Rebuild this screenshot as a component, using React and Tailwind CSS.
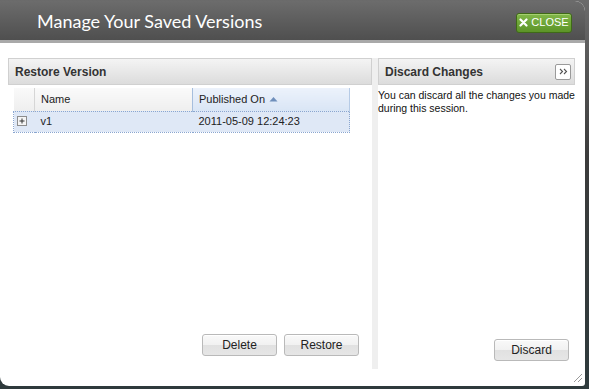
import React from "react";

function Btn({ children, className = "" }) {
  return (
    <button
      className={
        "h-[22px] w-[75px] rounded-[3px] border border-[#b9b9b9] bg-[linear-gradient(#f9f9f9_0%,#f1f1f1_50%,#e1e1e1_51%,#e6e6e6_100%)] text-[12px] text-[#222] leading-none shadow-[inset_0_1px_0_#fff] " +
        className
      }
      style={{ fontFamily: '"Liberation Sans", Arial, sans-serif' }}
    >
      {children}
    </button>
  );
}

function PanelHeader({ title, children }) {
  return (
    <div className="flex h-[27px] items-center justify-between border border-[#d0d0d0] bg-[linear-gradient(#f4f4f4,#dcdcdc)] pl-[6px] pr-[3px]">
      <span className="text-[12px] font-bold text-[#333]">{title}</span>
      {children}
    </div>
  );
}

export default function App() {
  return (
    <div
      className="relative h-[389px] w-[589px] overflow-hidden bg-[linear-gradient(#6b6b6b_0%,#3c3c3c_40%,#2e3a3c_100%)]"
      style={{ fontFamily: '"Liberation Sans", Arial, sans-serif' }}
    >
      <div className="mt-[1px] flex h-[385px] w-[585px] flex-col overflow-hidden rounded-tr-[10px] rounded-bl-[9px] rounded-br-[3px] bg-white">
        {/* Title bar */}
        <div className="flex h-[42px] shrink-0 items-center justify-between border-b-[3px] border-[#a9a9a9] bg-[linear-gradient(#6c6c6c,#4f4f4f)] pl-[37px] pr-[13px]">
          <h1
            className="pt-[2px] text-[18px] text-white"
            style={{ fontFamily: 'Lato, "Open Sans", sans-serif' }}
          >
            Manage Your Saved Versions
          </h1>
          <button className="mt-[4px] flex h-[20px] w-[56px] items-center justify-center gap-[3px] rounded-[3px] border border-[#3f6a17] bg-[linear-gradient(#82b84a,#5c9427)] text-[11px] text-white shadow-[inset_0_1px_0_#a5d070]">
            <svg width="9" height="9" viewBox="0 0 9 9">
              <path d="M1.5 1.5l6 6M7.5 1.5l-6 6" stroke="#fff" strokeWidth="2.2" strokeLinecap="round" />
            </svg>
            CLOSE
          </button>
        </div>

        {/* Body */}
        <div className="flex flex-1 px-[8px] pb-[17px] pt-[15px]">
          {/* Restore Version */}
          <div className="flex w-[364px] flex-col">
            <PanelHeader title="Restore Version" />
            <div className="pl-[5px] pt-[3px]">
              <table className="w-[337px] border-collapse text-[11px] text-[#222]">
                <thead>
                  <tr className="h-[23px]">
                    <th className="w-[21px] border-r border-[#d6d6d6] bg-[linear-gradient(#fafafa,#eeeeee)]"></th>
                    <th className="w-[158px] border-r border-[#a6bedd] bg-[linear-gradient(#fafafa,#eeeeee)] pl-[6px] text-left font-normal">
                      Name
                    </th>
                    <th className="border-r border-[#b6cbe6] bg-[linear-gradient(#ecf2fb,#d9e5f5)] pl-[6px] text-left font-normal">
                      <span className="inline-flex items-center gap-[4px]">
                        Published On
                        <svg width="9" height="6" viewBox="0 0 9 6">
                          <path d="M0.5 5.5L4.5 1l4 4.5z" fill="#6f8fbb" />
                        </svg>
                      </span>
                    </th>
                  </tr>
                </thead>
                <tbody>
                  <tr className="h-[21px] border border-dotted border-[#8aa6d0] bg-[#dfe8f6]">
                    <td className="pl-[3px]">
                      <svg width="11" height="11" viewBox="0 0 11 11">
                        <rect x="0.5" y="0.5" width="9" height="9" fill="#f5f5f5" stroke="#8d8d8d" />
                        <path d="M2.5 5h5M5 2.5v5" stroke="#333" strokeWidth="1" />
                      </svg>
                    </td>
                    <td className="pl-[6px]">v1</td>
                    <td className="pl-[6px]">2011-05-09 12:24:23</td>
                  </tr>
                </tbody>
              </table>
            </div>
            <div className="flex-1" />
            <div className="flex justify-end gap-[7px] pb-[13px] pr-[13px]">
              <Btn>Delete</Btn>
              <Btn>Restore</Btn>
            </div>
          </div>

          {/* Splitter */}
          <div className="w-[6px] bg-[#efefef]" />

          {/* Discard Changes */}
          <div className="flex w-[197px] flex-col">
            <PanelHeader title="Discard Changes">
              <button className="flex h-[16px] w-[16px] items-center justify-center rounded-[2px] border border-[#9a9a9a] bg-white text-[10px] leading-none text-[#555]">
                <svg width="9" height="7" viewBox="0 0 9 7">
                  <path d="M1 1l2.5 2.5L1 6M5 1l2.5 2.5L5 6" stroke="#555" strokeWidth="1.1" fill="none" />
                </svg>
              </button>
            </PanelHeader>
            <p className="whitespace-nowrap pt-[4px] text-[10.5px] leading-[13px] text-[#111]">
              You can discard all the changes you made
              <br />
              during this session.
            </p>
            <div className="flex-1" />
            <div className="flex justify-end pb-[8px] pr-[6px]">
              <Btn>Discard</Btn>
            </div>
          </div>
        </div>
      </div>

      {/* resize grip */}
      <svg className="absolute bottom-[6px] right-[6px]" width="10" height="10" viewBox="0 0 10 10">
        <path d="M1 9L9 1M5 9l4-4" stroke="#9a9a9a" strokeWidth="1" />
      </svg>
    </div>
  );
}
